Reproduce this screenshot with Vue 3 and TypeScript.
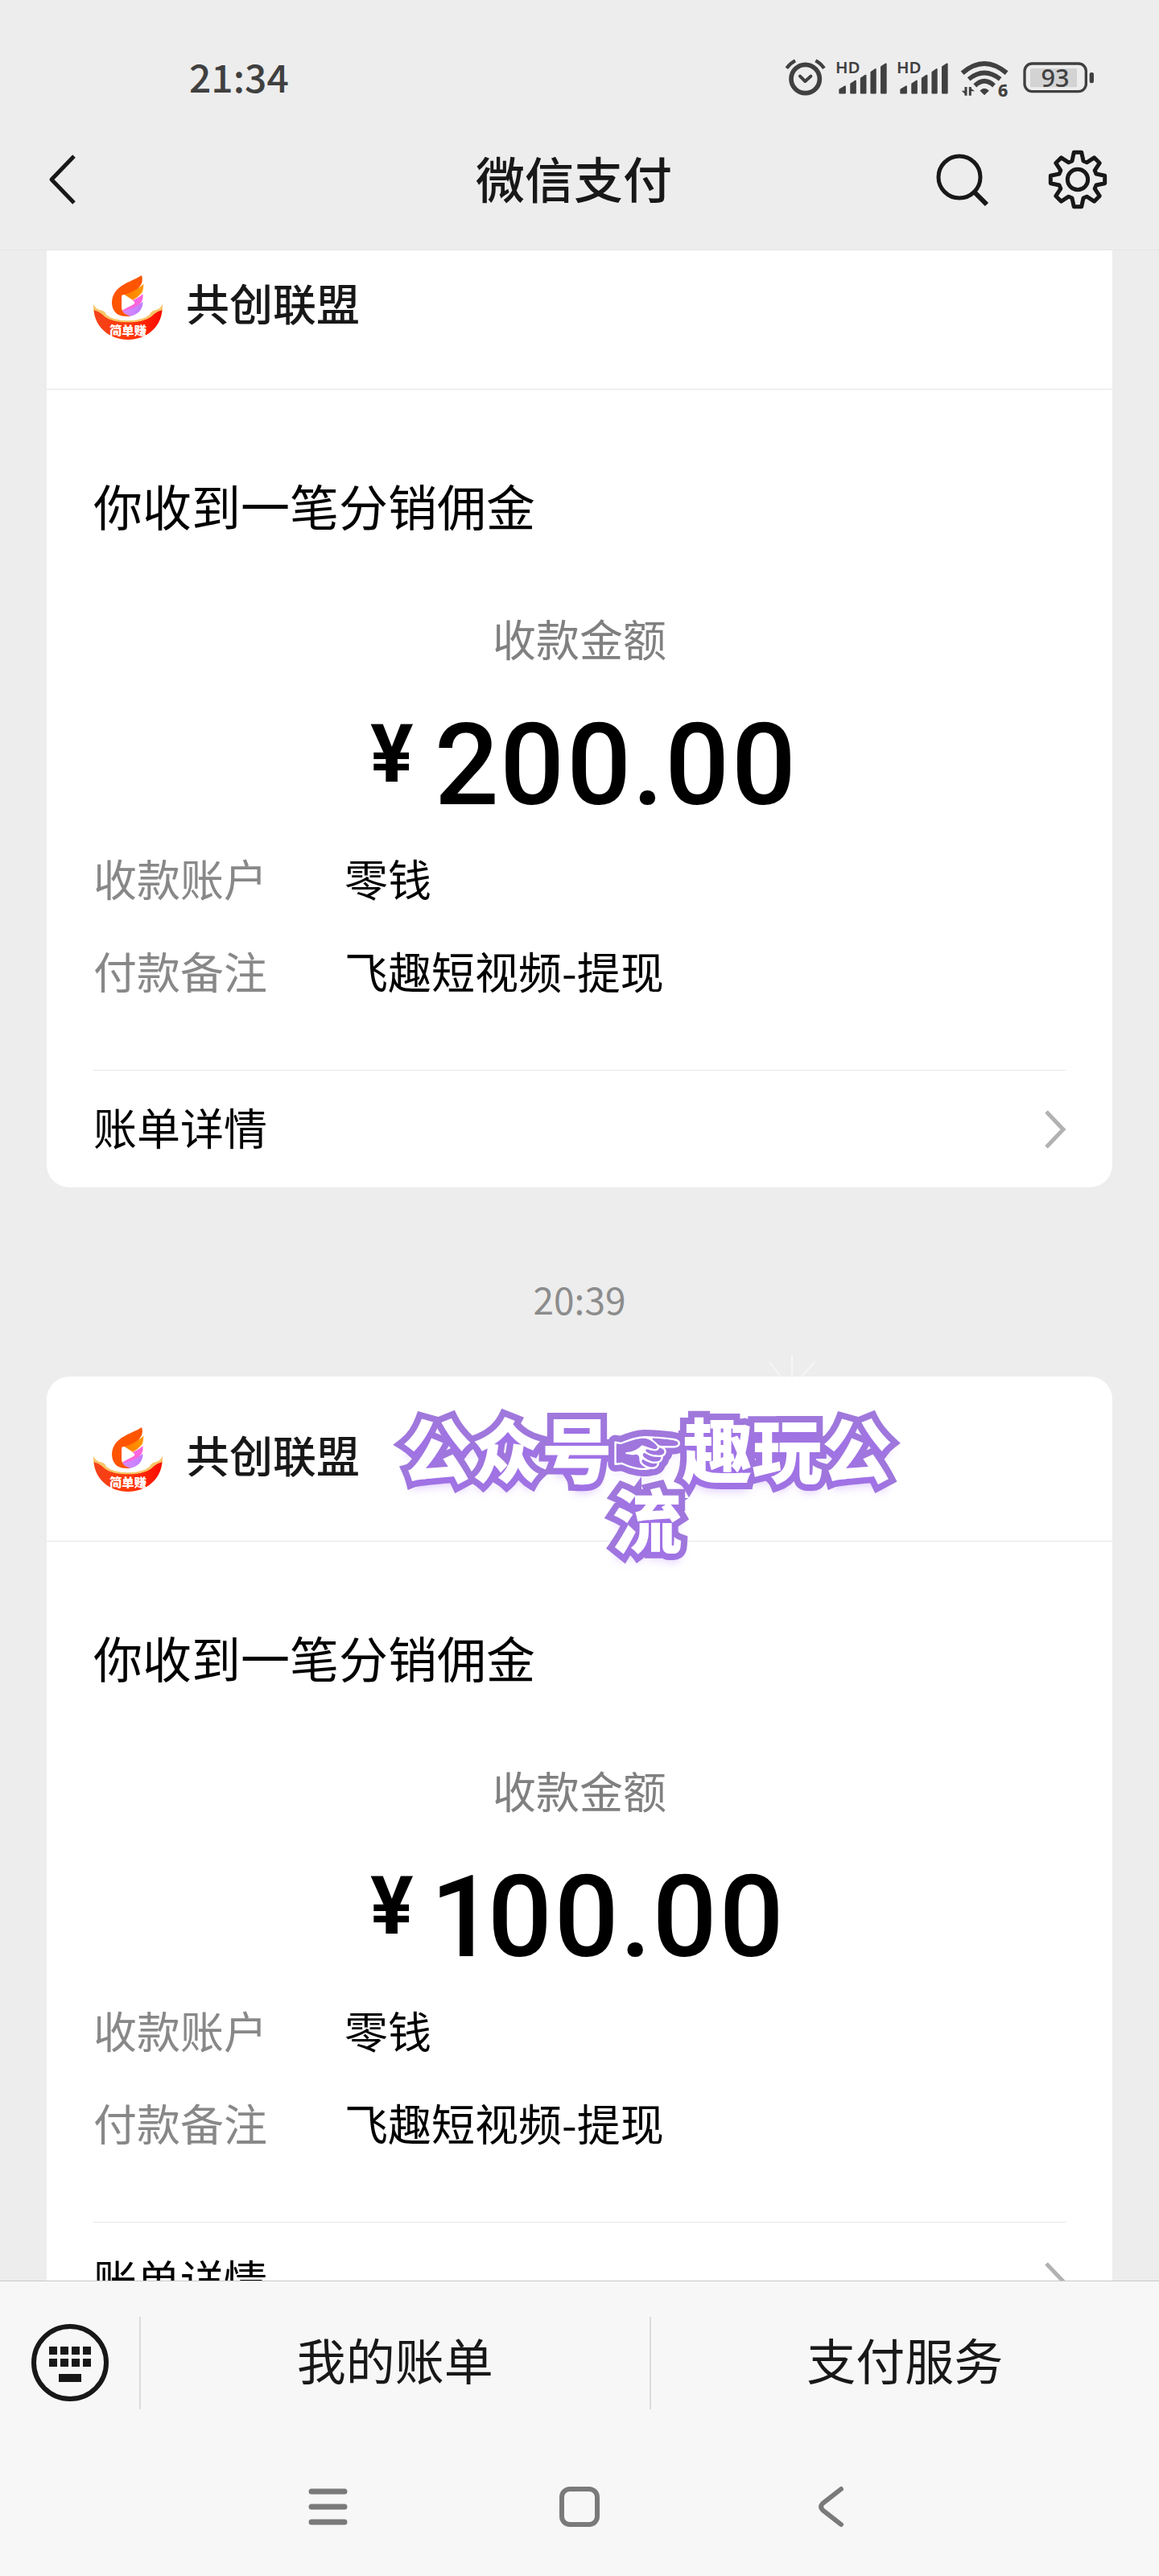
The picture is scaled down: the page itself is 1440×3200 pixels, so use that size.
<script setup lang="ts">
interface Bill {
  id: number
  time?: string
  brand: string
  title: string
  amount: string
  rows: { label: string; value: string }[]
  sticker?: string
}

const rows = [
  { label: '收款账户', value: '零钱' },
  { label: '付款备注', value: '飞趣短视频-提现' },
]

const bills: Bill[] = [
  { id: 1, brand: '共创联盟', title: '你收到一笔分销佣金', amount: '200.00', rows },
  {
    id: 2,
    time: '20:39',
    brand: '共创联盟',
    title: '你收到一笔分销佣金',
    amount: '100.00',
    rows,
    sticker: '公众号☞趣玩公流',
  },
]

// Outline of an eight-toothed gear centred on 0,0
function gearOutline(): string {
  const points: string[] = []
  const at = (radius: number, degrees: number) => {
    const a = (degrees * Math.PI) / 180
    return `${(radius * Math.sin(a)).toFixed(1)},${(-radius * Math.cos(a)).toFixed(1)}`
  }
  for (let tooth = 0; tooth < 8; tooth++) {
    const mid = tooth * 45
    points.push(at(72, mid - 17), at(102, mid - 8), at(102, mid + 8), at(72, mid + 17))
  }
  return `M${points.join('L')}Z`
}

const gear = gearOutline()
const signals = [1, 2]
const keys = [0, 1, 2, 3]
</script>

<template>
  <div class="screen">
    <header class="top">
      <div class="status">
        <time class="clock">21:34</time>
        <div class="status-icons">
          <svg width="51" height="50" viewBox="105 66 153 150" fill="none" stroke="#404040" stroke-linecap="round" stroke-linejoin="round" aria-label="闹钟">
            <circle cx="182" cy="144" r="53" stroke-width="17" />
            <path d="M162 134L181 153L202 134" stroke-width="12" />
            <path d="M112 104Q125 86 144 76M252 104Q239 86 220 76" stroke-width="13" stroke-linecap="butt" />
          </svg>
          <svg v-for="s in signals" :key="s" width="63" height="50" viewBox="297 66 190 150" fill="#404040" aria-label="信号">
            <text x="294" y="124" class="hd">HD</text>
            <g stroke="#404040" stroke-width="6" stroke-linejoin="round">
              <path d="M310 184L330 172V197H310Z" />
              <path d="M352 163L369 152V197H352Z" />
              <path d="M390 142L407 131V197H390Z" />
              <path d="M428 119L444 108V197H428Z" />
              <path d="M466 99L483 88V197H466Z" />
            </g>
          </svg>
          <svg width="64" height="50" viewBox="755 66 192 150" fill="none" stroke="#404040" aria-label="无线网络">
            <path d="M769 122Q851 52 934 122" stroke-width="18" />
            <path d="M793 145Q851 98 910 145" stroke-width="17" />
            <path d="M816 169Q851 136 887 169" stroke-width="17" />
            <path d="M836 188Q851 174 867 188L851 203Z" fill="#404040" stroke-width="3" stroke-linejoin="round" />
            <path d="M782 174V206M798 206V174" stroke-width="9" />
            <path d="M785 206L766 188H785ZM795 174L815 190H795Z" fill="#404040" stroke="none" />
            <text x="902" y="211" class="six">6</text>
          </svg>
          <svg width="92" height="50" viewBox="987 66 276 150" fill="none" aria-label="电量">
            <rect x="1002" y="87" width="229" height="104" rx="28" stroke="#404040" stroke-width="10" />
            <rect x="1023" y="105" width="174" height="70" rx="4" fill="#d3d3d3" />
            <rect x="1244" y="120" width="16" height="40" rx="7" fill="#404040" />
            <text x="1116" y="173" class="charge">93</text>
          </svg>
        </div>
      </div>
      <div class="nav">
        <button class="icon-button back" type="button" aria-label="返回">
          <svg width="48" height="64" viewBox="0 0 48 64" fill="none" stroke="#181818" stroke-width="5" stroke-linejoin="round">
            <path d="M42 3L14 32L42 61" />
          </svg>
        </button>
        <h1 class="nav-title">微信支付</h1>
        <div class="nav-actions">
          <button class="icon-button" type="button" aria-label="搜索">
            <svg width="72" height="72" viewBox="0 0 72 72" fill="none" stroke="#181818">
              <circle cx="34" cy="33" r="26" stroke-width="5" />
              <path d="M53 52L68 67" stroke-width="6" />
            </svg>
          </button>
          <button class="icon-button" type="button" aria-label="设置">
            <svg width="74" height="74" viewBox="-111 -111 222 222" fill="none" stroke="#181818" stroke-width="15" stroke-linejoin="round">
              <path :d="gear" />
              <circle r="38" />
            </svg>
          </button>
        </div>
      </div>
    </header>

    <main class="messages">
      <div class="list">
        <template v-for="bill in bills" :key="bill.id">
          <time v-if="bill.time" class="stamp">{{ bill.time }}</time>
          <article class="card">
            <div class="brand">
              <svg width="86" height="86" viewBox="78 48 258 258" aria-hidden="true">
                <defs>
                  <linearGradient id="bowl" x1="0" x2="1">
                    <stop offset="0" stop-color="#f4421c" />
                    <stop offset="0.5" stop-color="#ff3a08" />
                    <stop offset="1" stop-color="#fb0a04" />
                  </linearGradient>
                  <linearGradient id="wing" x1="0" x2="1">
                    <stop offset="0" stop-color="#ff7a00" />
                    <stop offset="1" stop-color="#ff9a00" />
                  </linearGradient>
                  <linearGradient id="violet" x1="0" x2="1">
                    <stop offset="0" stop-color="#d98cff" />
                    <stop offset="1" stop-color="#c07cff" />
                  </linearGradient>
                </defs>
                <path d="M78 174Q88 192 104 196Q120 198 126 212Q150 234 207 235Q264 234 288 212Q294 198 310 196Q326 192 336 174Q338 215 318 245H96Q76 215 78 174Z" fill="#f8c468" />
                <path d="M80 196Q98 200 112 212Q136 240 207 241Q278 240 302 212Q316 200 334 196C330 260 275 306 207 306C139 306 84 260 80 196Z" fill="url(#bowl)" />
                <path d="M184 198C210 192 240 182 262 164C264 195 240 218 205 219C190 218 184 208 184 198Z" fill="url(#violet)" />
                <path d="M200 170C225 160 250 148 262 135Q266 160 250 174Q225 192 186 200Z" fill="#fa66dc" />
                <path d="M190 136C225 128 250 112 265 98Q265 120 258 132Q245 148 225 158Z" fill="url(#wing)" />
                <path d="M258 66C232 84 195 92 168 118C138 148 142 196 170 212Q188 222 216 218Q184 210 184 188V140Q215 134 240 118Q258 104 260 88Q262 76 258 66Z" fill="#ff5400" />
                <path d="M190 142L228 162Q236 168 228 174L190 194Q184 194 184 188V148Q184 142 190 142Z" fill="#fff" />
                <text x="207" y="287" class="logo-text">简单赚</text>
              </svg>
              <h2 class="brand-name">{{ bill.brand }}</h2>
            </div>
            <div class="body">
              <h3 class="title">{{ bill.title }}</h3>
              <p class="caption">收款金额</p>
              <p class="amount">
                <span class="currency">¥</span>
                <span class="number">{{ bill.amount }}</span>
              </p>
              <dl class="facts">
                <template v-for="row in bill.rows" :key="row.label">
                  <dt>{{ row.label }}</dt>
                  <dd>{{ row.value }}</dd>
                </template>
              </dl>
              <a class="detail" href="#">
                <span class="detail-text">账单详情</span>
                <svg width="26" height="48" viewBox="0 0 26 48" fill="none" stroke="#b2b2b2" stroke-width="5">
                  <path d="M2 2L23 24L2 46" />
                </svg>
              </a>
            </div>
            <template v-if="bill.sticker">
              <svg class="sparkle" width="64" height="40" viewBox="0 0 64 40" fill="none" stroke="#f6f6f6" stroke-width="2" stroke-linecap="round" aria-hidden="true">
                <path d="M32 6V34M4 14L18 32M60 14L44 32" />
              </svg>
              <p class="sticker">{{ bill.sticker }}</p>
            </template>
          </article>
        </template>
      </div>
    </main>

    <footer class="bottom">
      <nav class="menu">
        <button class="keyboard" type="button" aria-label="键盘">
          <svg width="96" height="96" viewBox="0 0 96 96" fill="#181818">
            <circle cx="48" cy="48" r="45" fill="none" stroke="#181818" stroke-width="6" />
            <g v-for="k in keys" :key="k">
              <rect :x="22 + k * 14" y="28" width="10" height="10" />
              <rect :x="22 + k * 14" y="43" width="10" height="10" />
            </g>
            <rect x="34" y="62" width="28" height="10" />
          </svg>
        </button>
        <button class="menu-item" type="button">我的账单</button>
        <button class="menu-item" type="button">支付服务</button>
      </nav>
      <div class="system">
        <button type="button" aria-label="最近任务">
          <svg width="52" height="52" viewBox="0 0 52 52" stroke="#7a7a7a" stroke-width="7" stroke-linecap="round">
            <path d="M5 7H46M5 26H46M5 45H46" />
          </svg>
        </button>
        <button type="button" aria-label="主屏幕">
          <svg width="52" height="52" viewBox="0 0 52 52" fill="none" stroke="#7a7a7a" stroke-width="6">
            <rect x="4" y="4" width="44" height="44" rx="10" />
          </svg>
        </button>
        <button type="button" aria-label="系统返回">
          <svg width="52" height="52" viewBox="0 0 52 52" fill="none" stroke="#7a7a7a" stroke-width="6" stroke-linecap="round">
            <path d="M39 4L16 22Q12 26 16 30L39 48" />
          </svg>
        </button>
      </div>
    </footer>
  </div>
</template>

<style>
body {
  margin: 0;
  background: #ededed;
}
</style>

<style scoped>
.screen {
  display: flex;
  flex-direction: column;
  height: 100vh;
  overflow: hidden;
  background: #ededed;
  color: #181818;
  font-family: "Noto Sans CJK SC", "Noto Sans", sans-serif;
}

.screen svg {
  display: block;
  flex: none;
  overflow: visible;
}

h1,
h2,
h3,
p,
dl,
dd {
  margin: 0;
  font-weight: 400;
}

button {
  padding: 0;
  border: 0;
  background: none;
  color: inherit;
  font: inherit;
}

.top {
  flex: none;
  border-bottom: 1px solid #e6e6e6;
}

.status {
  display: flex;
  align-items: center;
  justify-content: space-between;
  box-sizing: border-box;
  height: 136px;
  padding: 58px 80px 0 235px;
}

.clock {
  padding-bottom: 6px;
  color: #404040;
  font-size: 48px;
  font-weight: 500;
  line-height: 72px;
}

.status-icons {
  display: flex;
  gap: 13px;
}

.hd,
.six,
.charge {
  fill: #404040;
  font-family: "Noto Sans", sans-serif;
}

.hd {
  font-size: 62px;
  font-weight: 600;
}

.six {
  font-size: 64px;
  font-weight: 700;
}

.charge {
  font-size: 92px;
  font-weight: 500;
  text-anchor: middle;
}

.nav {
  display: grid;
  grid-template-columns: 1fr auto 1fr;
  align-items: center;
  height: 174px;
  padding: 0 64px 0 50px;
}

.back {
  justify-self: start;
}

.nav-title {
  padding-bottom: 4px;
  font-size: 61px;
  font-weight: 500;
  line-height: 84px;
}

.nav-actions {
  display: flex;
  align-items: center;
  justify-content: flex-end;
  gap: 72px;
}

.messages {
  flex: 1;
  min-height: 0;
  overflow: hidden;
}

/* The first card starts slightly scrolled under the header */
.list {
  display: flex;
  flex-direction: column;
  margin-top: -32px;
  padding: 0 58px;
}

.stamp {
  padding: 108px 0 67px;
  color: #8c8c8c;
  font-size: 46px;
  line-height: 60px;
  text-align: center;
}

.card {
  position: relative;
  border-radius: 28px;
  background: #fff;
}

.brand {
  display: flex;
  align-items: center;
  gap: 29px;
  box-sizing: border-box;
  height: 205px;
  padding: 0 58px 4px;
  border-bottom: 1px solid #e5e5e5;
}

.brand-name {
  padding-bottom: 6px;
  font-size: 54px;
  font-weight: 500;
  line-height: 72px;
}

.logo-text {
  fill: #fff;
  font-size: 46px;
  font-weight: 900;
  text-anchor: middle;
}

.body {
  padding: 102px 58px 0;
  color: #000;
}

.title {
  font-size: 61px;
  line-height: 84px;
}

.caption {
  margin-top: 87px;
  color: #808080;
  font-size: 54px;
  line-height: 72px;
  text-align: center;
}

.amount {
  display: flex;
  align-items: flex-start;
  gap: 26px;
  width: 520px;
  margin: 50px auto 0;
  font-family: Roboto, sans-serif;
  font-variant-numeric: proportional-nums;
  white-space: nowrap;
}

.currency {
  padding-top: 8px;
  font-size: 100px;
  font-weight: 700;
  line-height: 100px;
}

.number {
  font-size: 141px;
  font-weight: 500;
  line-height: 144px;
}

.facts {
  display: grid;
  grid-template-columns: 312px 1fr;
  row-gap: 43px;
  margin-top: 32px;
  font-size: 54px;
  line-height: 72px;
}

.facts dt {
  color: #888;
}

.detail {
  display: flex;
  align-items: center;
  justify-content: space-between;
  height: 145px;
  margin-top: 87px;
  border-top: 1px solid #e5e5e5;
  color: inherit;
  font-size: 54px;
  line-height: 72px;
  text-decoration: none;
}

.detail-text {
  padding-bottom: 6px;
}

.sparkle {
  position: absolute;
  top: -32px;
  left: 894px;
}

.sticker {
  position: absolute;
  top: 45px;
  left: 436px;
  width: 620px;
  color: #fff;
  font-size: 87px;
  font-weight: 900;
  line-height: 87px;
  text-align: center;
  -webkit-text-stroke: 16px #a078dc;
  paint-order: stroke fill;
  text-shadow: 0 10px 12px rgba(160, 100, 255, 0.35);
}

.bottom {
  flex: none;
  border-top: 1px solid #c8c8c8;
  background: #f7f7f7;
}

.menu {
  display: flex;
  align-items: center;
  height: 202px;
}

.keyboard {
  display: flex;
  flex: none;
  justify-content: center;
  width: 173px;
}

.menu-item {
  flex: 1;
  height: 115px;
  padding-bottom: 8px;
  border-left: 2px solid #dcdcdc;
  font-size: 61px;
  line-height: 84px;
}

.system {
  display: flex;
  align-items: center;
  height: 156px;
  padding: 0 17.5% 8px;
}

.system button {
  display: flex;
  flex: 1;
  justify-content: center;
}
</style>
